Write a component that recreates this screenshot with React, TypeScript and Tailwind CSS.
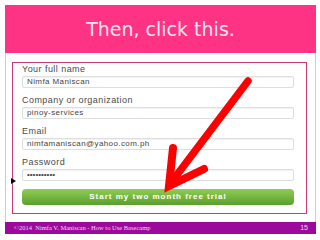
import React from 'react'

const fields = [
  { label: 'Your full name', value: 'Nimfa Maniscan' },
  { label: 'Company or organization', value: 'pinoy-services' },
  { label: 'Email', value: 'nimfamaniscan@yahoo.com.ph' },
  { label: 'Password', value: '••••••••••', password: true },
]

export default function App() {
  return (
    <div className="relative w-[320px] h-[240px] bg-white overflow-hidden" style={{ fontFamily: '"Liberation Sans", Arial, sans-serif' }}>
      <div className="ml-[5px] mt-[5px] w-[311px] flex flex-col">
        {/* Title */}
        <div
          className="h-[48px] bg-[#fe3384] flex items-center justify-center text-[#fde4ef] text-[19px]"
          style={{ fontFamily: '"DejaVu Sans", Verdana, sans-serif' }}
        >
          Then, click this.
        </div>

        {/* Slide body */}
        <div className="h-[169px] border-x border-[#d9c6dc] pt-[9px] pl-[6px]">
          <div className="relative w-[295px] border border-[#c93a72] pt-px pl-[9px] pr-[12px] pb-[8px] flex flex-col gap-[7px]">
            {fields.map(f => (
              <div key={f.label} className="flex flex-col">
                <div className="h-[11px] leading-[11px] text-[9px] tracking-[0.45px] text-[#4a4a4a]">{f.label}</div>
                <div className="mt-px h-[12px] rounded-[2px] border border-[#dedede] bg-white shadow-[inset_0_1px_1px_rgba(0,0,0,0.06)] flex items-center pl-[4px]">
                  <span className={f.password ? 'text-[8px] text-[#444] tracking-[0px]' : 'text-[8px] tracking-[0.4px] text-[#444]'}>
                    {f.value}
                  </span>
                </div>
              </div>
            ))}
            <div className="mt-px h-[16px] rounded-[4px] bg-gradient-to-b from-[#8fcd54] to-[#5c9f2d] flex items-center justify-center text-white font-bold text-[8px] tracking-[1px]">
              Start my two month free trial
            </div>
            {/* small pointer marker */}
            <div className="absolute left-[-2px] top-[115px] w-0 h-0 border-y-[3px] border-y-transparent border-l-[5px] border-l-black" />
          </div>
        </div>

        {/* Footer */}
        <div className="h-[12px] bg-[#9c0a9c] flex items-center justify-between pl-[9px] pr-[8px] text-[#f3d6f3]">
          <span className="text-[6.5px]" style={{ fontFamily: '"Liberation Serif", "Times New Roman", serif' }}>
            ©2014&nbsp; Nimfa V. Maniscan - How to Use Basecamp
          </span>
          <span className="text-[7px]">15</span>
        </div>
      </div>

      {/* Red arrow */}
      <svg className="absolute left-0 top-0 pointer-events-none" width="320" height="240" viewBox="0 0 320 240">
        <line x1="248" y1="81" x2="170" y2="184" stroke="#ff0000" strokeWidth="7.5" strokeLinecap="round" />
        <polyline points="173,148 169,186 204,169" fill="none" stroke="#ff0000" strokeWidth="8" strokeLinecap="round" strokeLinejoin="miter" />
      </svg>
    </div>
  )
}
